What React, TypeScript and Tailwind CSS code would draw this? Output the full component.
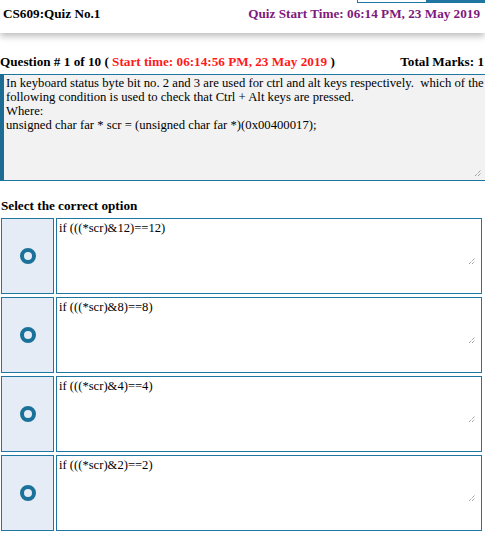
const options = [
  "if (((*scr)&12)==12)",
  "if (((*scr)&8)==8)",
  "if (((*scr)&4)==4)",
  "if (((*scr)&2)==2)",
];

function Grip() {
  return (
    <svg width="8" height="8" viewBox="0 0 8 8" className="absolute">
      <path d="M1 7 L7 1 M4 7 L7 4" stroke="#7a7a7a" strokeWidth="1" strokeDasharray="1 1" />
    </svg>
  );
}

function OptionRow({ text }: { text: string }) {
  return (
    <div className="flex gap-[2px] h-[76px]">
      <div className="w-[53px] shrink-0 bg-[#e6ecf5] border border-[#1f76a1] flex items-center justify-center">
        <div className="w-[16px] h-[16px] rounded-full border-[4px] border-[#1a7199]" />
      </div>
      <div className="relative w-[426px] bg-white border border-[#1f76a1] px-[2px] pt-[2px] text-[12.6px] leading-[15px] text-black">
        {text}
        <div className="absolute right-[5px] top-[38px] w-[8px] h-[8px]">
          <Grip />
        </div>
      </div>
    </div>
  );
}

export default function App() {
  return (
    <div className="w-[485px] h-[534px] overflow-hidden bg-white text-black font-['Liberation_Serif',serif]">
      <div className="relative bg-white shadow-[0_3px_7px_rgba(0,0,0,0.28)] h-[33px]">
        <div className="flex justify-end">
          <div className="flex h-[3px] w-[128px] border-l border-b border-[#1f76a1]">
            <div className="w-[68px] bg-white" />
            <div className="flex-1 bg-[#1f76a1]" />
          </div>
        </div>
        <div className="flex justify-between items-center px-[3px] pt-[3px] text-[13.2px] leading-[16px] font-bold">
          <span>CS609:Quiz No.1</span>
          <span className="text-[#7d1a7d] pr-[2px]">Quiz Start Time: 06:14 PM, 23 May 2019</span>
        </div>
      </div>

      <div className="flex justify-between items-center mt-[21px] text-[13.2px] font-bold leading-[16px]">
        <span>
          Question # 1 of 10 ( <span className="text-[#ff1a1a]">Start time: 06:14:56 PM, 23 May 2019</span> )
        </span>
        <span className="pr-[1px]">Total Marks: 1</span>
      </div>

      <div className="relative mt-[4px] h-[107px] bg-[#f2f2f2] border-t border-b border-[#1f76a1] border-l-[4px] border-l-[#1c6c94] pl-[2px] pt-[1px] text-[12.7px] leading-[14px]">
        <p>In keyboard status byte bit no. 2 and 3 are used for ctrl and alt keys respectively.&nbsp; which of the following condition is used to check that Ctrl + Alt keys are pressed.</p>
        <p>Where:</p>
        <p>unsigned char far * scr = (unsigned char far *)(0x00400017);</p>
        <div className="absolute right-[3px] bottom-[3px] w-[8px] h-[8px]">
          <Grip />
        </div>
      </div>

      <div className="mt-[17px] pl-[1px] text-[13.2px] font-bold leading-[16px]">Select the correct option</div>

      <div className="mt-[4px] pl-[1px] flex flex-col gap-[3px]">
        {options.map((o) => (
          <OptionRow key={o} text={o} />
        ))}
      </div>
    </div>
  );
}
